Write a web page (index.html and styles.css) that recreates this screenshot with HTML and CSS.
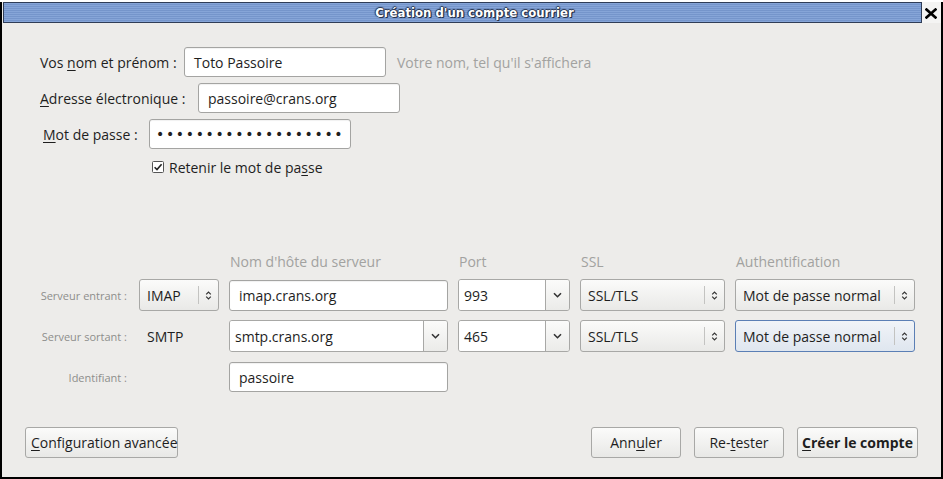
FILE: index.html
```html
<!DOCTYPE html>
<html lang="fr">
<head>
<meta charset="utf-8">
<title>Création d'un compte courrier</title>
<link rel="stylesheet" href="styles.css">
</head>
<body>
<div class="window">
  <div class="titlerow">
    <div class="titlebar"><span class="title">Création d'un compte courrier</span></div>
    <div class="close">
      <svg width="12" height="11" viewBox="0 0 12 11"><path d="M1.5 1.5 L10.5 9.5 M10.5 1.5 L1.5 9.5" stroke="#000" stroke-width="2.6" stroke-linecap="square"/></svg>
    </div>
  </div>
  <div class="content">
    <div class="identity">
      <div class="row">
        <span class="lbl lbl-name">Vos <u>n</u>om et prénom :</span>
        <div class="field">Toto Passoire</div>
        <span class="hint">Votre nom, tel qu'il s'affichera</span>
      </div>
      <div class="row">
        <span class="lbl lbl-mail"><u>A</u>dresse électronique :</span>
        <div class="field">passoire@crans.org</div>
      </div>
      <div class="row">
        <span class="lbl lbl-pass"><u>M</u>ot de passe :</span>
        <div class="field dots">•••••••••••••••••••</div>
      </div>
    </div>
    <div class="check">
      <svg class="cbox" width="12" height="12" viewBox="0 0 12 12"><rect x="0.5" y="0.5" width="11" height="11" rx="1" fill="#fff" stroke="#555"/><path d="M2.6 6.2 L5 8.6 L9.6 3.2" fill="none" stroke="#222" stroke-width="1.6"/></svg>
      <span>Retenir le mot de pa<u>s</u>se</span>
    </div>

    <div class="servers">
      <span></span><span></span>
      <span class="colhead">Nom d'hôte du serveur</span>
      <span class="colhead">Port</span>
      <span class="colhead">SSL</span>
      <span class="colhead">Authentification</span>

      <span class="slbl">Serveur entrant :</span>
      <div class="select"><span class="val">IMAP</span><span class="sep"></span><span class="arr"><svg width="7" height="11" viewBox="0 0 7 11"><path d="M1.2 4.3 L3.5 2 L5.8 4.3 M1.2 6.7 L3.5 9 L5.8 6.7" fill="none" stroke="#333" stroke-width="1.2"/></svg></span></div>
      <div class="field host">imap.crans.org</div>
      <div class="combo"><span class="val">993</span><span class="cbtn"><svg width="9" height="6" viewBox="0 0 9 6"><path d="M1 1.2 L4.5 4.7 L8 1.2" fill="none" stroke="#333" stroke-width="1.6"/></svg></span></div>
      <div class="select"><span class="val">SSL/TLS</span><span class="sep"></span><span class="arr"><svg width="7" height="11" viewBox="0 0 7 11"><path d="M1.2 4.3 L3.5 2 L5.8 4.3 M1.2 6.7 L3.5 9 L5.8 6.7" fill="none" stroke="#333" stroke-width="1.2"/></svg></span></div>
      <div class="select"><span class="val">Mot de passe normal</span><span class="sep"></span><span class="arr"><svg width="7" height="11" viewBox="0 0 7 11"><path d="M1.2 4.3 L3.5 2 L5.8 4.3 M1.2 6.7 L3.5 9 L5.8 6.7" fill="none" stroke="#333" stroke-width="1.2"/></svg></span></div>

      <span class="slbl">Serveur sortant :</span>
      <span class="plain">SMTP</span>
      <div class="combo"><span class="val">smtp.crans.org</span><span class="cbtn"><svg width="9" height="6" viewBox="0 0 9 6"><path d="M1 1.2 L4.5 4.7 L8 1.2" fill="none" stroke="#333" stroke-width="1.6"/></svg></span></div>
      <div class="combo"><span class="val">465</span><span class="cbtn"><svg width="9" height="6" viewBox="0 0 9 6"><path d="M1 1.2 L4.5 4.7 L8 1.2" fill="none" stroke="#333" stroke-width="1.6"/></svg></span></div>
      <div class="select"><span class="val">SSL/TLS</span><span class="sep"></span><span class="arr"><svg width="7" height="11" viewBox="0 0 7 11"><path d="M1.2 4.3 L3.5 2 L5.8 4.3 M1.2 6.7 L3.5 9 L5.8 6.7" fill="none" stroke="#333" stroke-width="1.2"/></svg></span></div>
      <div class="select focused"><span class="val">Mot de passe normal</span><span class="sep"></span><span class="arr"><svg width="7" height="11" viewBox="0 0 7 11"><path d="M1.2 4.3 L3.5 2 L5.8 4.3 M1.2 6.7 L3.5 9 L5.8 6.7" fill="none" stroke="#333" stroke-width="1.2"/></svg></span></div>

      <span class="slbl">Identifiant :</span>
      <span></span>
      <div class="field host user">passoire</div>
    </div>

    <div class="actions">
      <button class="btn btn-adv"><u>C</u>onfiguration avancée</button>
      <div class="spacer"></div>
      <button class="btn">Ann<u>u</u>ler</button>
      <button class="btn">Re-<u>t</u>ester</button>
      <button class="btn btn-main"><u>C</u>réer le compte</button>
    </div>
  </div>
</div>
</body>
</html>
```

FILE: styles.css
```css
* { box-sizing: border-box; }
html, body {
  margin: 0;
  padding: 0;
  background: #fff;
}
body {
  width: 943px;
  height: 479px;
  overflow: hidden;
  font-family: "Open Sans", "DejaVu Sans", sans-serif;
  font-size: 14px;
  color: #1e1e1e;
}
u { text-decoration: underline; text-underline-offset: 2px; text-decoration-thickness: 1px; }

.window {
  margin-top: 2px;
  height: 477px;
  display: flex;
  flex-direction: column;
  background: #edecea;
  border-left: 2px solid #000;
  border-right: 2px solid #000;
  border-bottom: 2px solid #000;
}

.titlerow {
  height: 21px;
  display: flex;
  align-items: stretch;
  background: #edecea;
}
.titlebar {
  margin-left: 1px;
  width: 919px;
  height: 21px;
  border: 1px solid #2f3d57;
  background: repeating-linear-gradient(to bottom, #86a5d8 0px, #86a5d8 1px, #7595cb 1px, #7595cb 2px);
  display: flex;
  align-items: center;
  justify-content: center;
}
.title {
  font-family: "DejaVu Sans Condensed", "DejaVu Sans", sans-serif;
  font-stretch: condensed;
  font-weight: bold;
  font-size: 13px;
  color: #fff;
  padding-left: 24px;
  text-shadow: 1px 1px 0 #26314a, -1px 0 1px #26314a, 0 -1px 1px #26314a, 1px 0 1px #26314a;
}
.close {
  flex: 1;
  display: flex;
  justify-content: center;
  padding-top: 6px;
  padding-right: 2px;
  background: #f4f4f3;
}

.content {
  flex: 1;
  display: flex;
  flex-direction: column;
  padding: 24px 0 19px 0;
}

.identity {
  display: flex;
  flex-direction: column;
  gap: 6px;
  padding-left: 38px;
}
.row {
  display: flex;
  align-items: center;
  height: 30px;
}
.lbl { white-space: nowrap; }
.lbl-name { width: 144px; }
.lbl-mail { width: 158px; }
.lbl-pass { width: 106px; margin-left: 3px; }

.field {
  width: 202px;
  height: 30px;
  background: #fff;
  border: 1px solid #a4a4a2;
  border-radius: 3px;
  padding-left: 9px;
  display: flex;
  align-items: center;
  white-space: nowrap;
  box-shadow: inset 0 1px 1px rgba(0,0,0,0.06);
}
.dots {
  font-family: "DejaVu Sans", sans-serif;
  font-size: 14px;
  letter-spacing: 1.65px;
  padding-left: 6px;
}
.hint {
  margin-left: 11px;
  color: #a2a2a0;
}

.check {
  margin-top: 8px;
  height: 20px;
  padding-left: 150px;
  display: flex;
  align-items: center;
  gap: 5px;
}
.cbox { flex: none; }

.servers {
  margin-top: 77px;
  display: grid;
  grid-template-columns: 127px 80px 219px 112px 145px 180px;
  grid-template-rows: 16px 32px 32px 32px;
  column-gap: 10px;
  row-gap: 9px;
  align-items: center;
}
.colhead {
  color: #a2a2a0;
  padding-left: 1px;
  white-space: nowrap;
  line-height: 16px;
}
.slbl {
  font-size: 11px;
  color: #8e8e8c;
  text-align: right;
  padding-right: 2px;
  white-space: nowrap;
}
.plain { padding-left: 8px; }
.servers .host { width: 219px; height: 31px; }
.servers .user { height: 30px; align-self: start; margin-top: 1px; }

.select {
  height: 32px;
  border: 1px solid #a8a8a6;
  border-radius: 3px;
  background: linear-gradient(to bottom, #fbfbfa, #e9e9e7);
  display: flex;
  align-items: center;
  white-space: nowrap;
}
.select .val { flex: 1; padding-left: 7px; }
.select .sep { width: 1px; height: 18px; background: #c3c3c1; }
.select .arr { width: 19px; display: flex; justify-content: center; }
.select.focused {
  border-color: #5b7fb5;
  background: linear-gradient(to bottom, #f1f4f8, #dfe6ef);
}

.combo {
  height: 32px;
  border: 1px solid #a8a8a6;
  border-radius: 3px;
  display: flex;
  overflow: hidden;
  white-space: nowrap;
}
.combo .val {
  flex: 1;
  background: #fff;
  display: flex;
  align-items: center;
  padding-left: 5px;
}
.combo .cbtn {
  width: 24px;
  border-left: 1px solid #a8a8a6;
  background: linear-gradient(to bottom, #fbfbfa, #ebebe9);
  display: flex;
  align-items: center;
  justify-content: center;
}

.actions {
  margin-top: auto;
  display: flex;
  align-items: center;
  gap: 13px;
  padding: 0 23px;
}
.spacer { flex: 1; }
.btn {
  font: inherit;
  color: #1e1e1e;
  height: 31px;
  min-width: 90px;
  padding: 0 5px;
  border: 1px solid #a8a8a6;
  border-radius: 3px;
  background: linear-gradient(to bottom, #fbfbfa, #e8e8e6);
  white-space: nowrap;
}
.btn-adv { width: 153px; }
.btn-main { font-weight: bold; width: 121px; padding: 0 3px; }
```
